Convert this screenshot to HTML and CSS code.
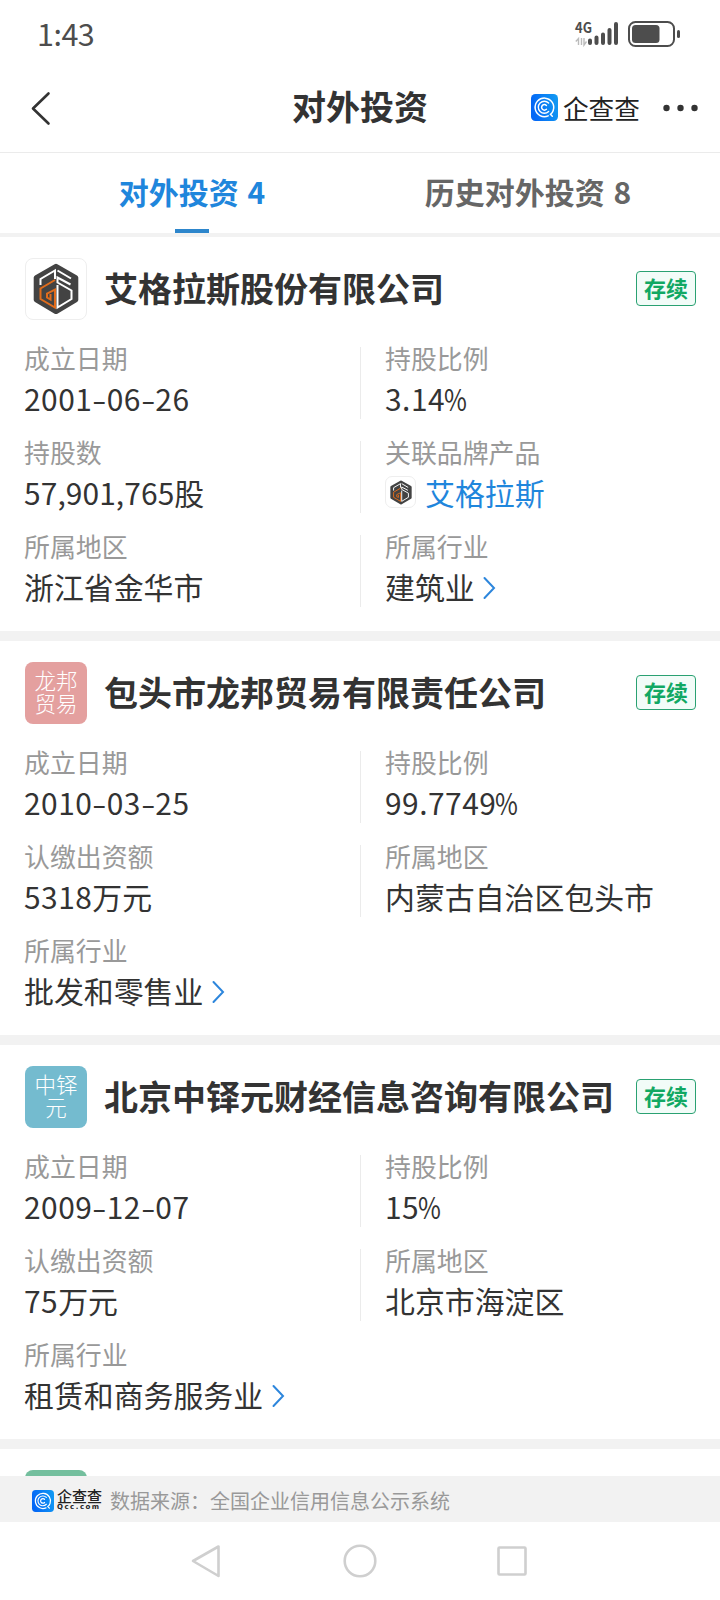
FILE: index.html
```
<!DOCTYPE html>
<html lang="zh-CN">
<head>
<meta charset="utf-8">
<title>对外投资</title>
<link rel="stylesheet" href="styles.css">
</head>
<body>
<svg class="defs" aria-hidden="true">
  <defs>
    <linearGradient id="blue" x1="0" x2="1" y1="0.2" y2="0"><stop offset="0" stop-color="#0468f6"/><stop offset="1" stop-color="#129cf2"/></linearGradient>
    <symbol id="qcc" viewBox="0 0 27 27">
      <rect width="27" height="27" rx="4.5" fill="url(#blue)"/>
      <g fill="none" stroke="#fff" stroke-linecap="round">
        <path d="M17.200 21.900A9.300 9.300 0 1 1 22.200 16.500Q21.500 18.800 19.500 20.300L21.300 22.200" stroke-width="1.500"/>
        <path d="M17.600 9.100A6 6 0 1 0 17.600 17.500" stroke-width="1.400"/>
        <path d="M15.400 11.400A2.800 2.800 0 1 0 15.400 15.300" stroke-width="1.500"/>
      </g>
    </symbol>
    <symbol id="gs" viewBox="0 0 46 52">
      <path d="M21.600 1.300Q23 .4 24.400 1.300L44 12.600Q45.300 13.400 45.300 14.600V37Q45.300 38.200 44 39L24.400 50.700Q23 51.500 21.600 50.700L2 39Q.7 38.200 .7 37V14.600Q.7 13.400 2 12.600Z" fill="#434343"/>
      <g fill="none" stroke-width="2">
        <path d="M7.500 22V16L22 7.500V16" stroke="#fff"/>
        <path d="M24.500 7.500L38 15.500M37.500 21.500L24.500 14.500V19.500L38.500 27.500V36L24.500 44.500V22" stroke="#fff"/>
        <path d="M22 17L7.500 25.500V36L22 44.500V26.500L14 30.500V34.500L17.500 36.500V31" stroke="#e06c1c"/>
      </g>
    </symbol>
  </defs>
</svg>
<div class="screen">
  <div class="status">
    <span class="time">1:43</span>
    <svg class="signal" width="108" height="32" viewBox="0 0 108 32">
      <text x="0" y="14" class="net" textLength="17" lengthAdjust="spacingAndGlyphs">4G</text>
      <path d="M3.500 26V19.500L.800 22.500M6.500 19V26M9 19V26L11.500 22.500" fill="none" stroke="#bbb" stroke-width="1.400"/>
      <g stroke="#4d4d4d" stroke-width="4" stroke-linecap="round"><path d="M15 21.500V24M21.500 18.500V24M28 15.500V24M34.500 11V24M41 5V24"/></g>
      <rect x="54" y="3" width="45" height="24" rx="6.500" fill="none" stroke="#4d4d4d" stroke-width="2"/>
      <rect x="57" y="6" width="27.500" height="18" rx="3.500" fill="#4d4d4d"/>
      <path d="M103.500 12.500V17.500" stroke="#4d4d4d" stroke-width="3" stroke-linecap="round"/>
    </svg>
  </div>
  <header class="nav">
    <svg class="back" width="20" height="36" viewBox="0 0 20 36"><path d="M17.500 3.500L2 18.500L17.500 33.500" fill="none" stroke="#333" stroke-width="2.600" stroke-linecap="round" stroke-linejoin="round"/></svg>
    <h1 class="heading">对外投资</h1>
    <div class="brand"><svg width="27" height="27"><use href="#qcc"/></svg><span class="brand-name">企查查</span>
      <svg class="more" width="36" height="8" viewBox="0 0 36 8" fill="#333"><circle cx="3.500" cy="4" r="3.200"/><circle cx="17.500" cy="4" r="3.200"/><circle cx="31.500" cy="4" r="3.200"/></svg>
    </div>
  </header>
  <nav class="tabs">
    <span class="tab active">对外投资 4</span>
    <span class="tab">历史对外投资 8</span>
  </nav>
  <main class="list">
    <article class="card">
      <div class="card-head"><span class="avatar image"><svg width="46" height="52"><use href="#gs"/></svg></span><h2 class="name">艾格拉斯股份有限公司</h2><span class="badge">存续</span></div>
      <div class="facts">
        <div class="fact"><span class="label">成立日期</span><span class="value">2001<i>-</i>06<i>-</i>26</span></div>
        <div class="fact"><span class="label">持股比例</span><span class="value">3.14<em>%</em></span></div>
        <div class="fact"><span class="label">持股数</span><span class="value grouped">57,901,765<b>股</b></span></div>
        <div class="fact"><span class="label">关联品牌产品</span><span class="value zh link"><span class="mini"><svg width="22" height="25"><use href="#gs"/></svg></span>艾格拉斯</span></div>
        <div class="fact"><span class="label">所属地区</span><span class="value zh">浙江省金华市</span></div>
        <div class="fact"><span class="label">所属行业</span><span class="value zh">建筑业<svg class="chevron" width="13" height="24" viewBox="0 0 13 24"><path d="M1.500 2L11 12L1.500 22"/></svg></span></div>
      </div>
    </article>
    <article class="card">
      <div class="card-head"><span class="avatar pink"><span>龙邦</span><span>贸易</span></span><h2 class="name">包头市龙邦贸易有限责任公司</h2><span class="badge">存续</span></div>
      <div class="facts">
        <div class="fact"><span class="label">成立日期</span><span class="value">2010<i>-</i>03<i>-</i>25</span></div>
        <div class="fact"><span class="label">持股比例</span><span class="value">99.7749<em>%</em></span></div>
        <div class="fact"><span class="label">认缴出资额</span><span class="value">5318<b>万元</b></span></div>
        <div class="fact"><span class="label">所属地区</span><span class="value zh">内蒙古自治区包头市</span></div>
        <div class="fact"><span class="label">所属行业</span><span class="value zh">批发和零售业<svg class="chevron" width="13" height="24" viewBox="0 0 13 24"><path d="M1.500 2L11 12L1.500 22"/></svg></span></div>
      </div>
    </article>
    <article class="card">
      <div class="card-head"><span class="avatar teal"><span>中铎</span><span>元</span></span><h2 class="name">北京中铎元财经信息咨询有限公司</h2><span class="badge">存续</span></div>
      <div class="facts">
        <div class="fact"><span class="label">成立日期</span><span class="value">2009<i>-</i>12<i>-</i>07</span></div>
        <div class="fact"><span class="label">持股比例</span><span class="value">15<em>%</em></span></div>
        <div class="fact"><span class="label">认缴出资额</span><span class="value">75<b>万元</b></span></div>
        <div class="fact"><span class="label">所属地区</span><span class="value zh">北京市海淀区</span></div>
        <div class="fact"><span class="label">所属行业</span><span class="value zh">租赁和商务服务业<svg class="chevron" width="13" height="24" viewBox="0 0 13 24"><path d="M1.500 2L11 12L1.500 22"/></svg></span></div>
      </div>
    </article>
    <article class="card"><div class="card-head"><span class="avatar green"></span></div></article>
  </main>
  <footer class="source">
    <svg width="22" height="22"><use href="#qcc"/></svg>
    <span class="source-brand"><span class="source-zh">企查查</span><span class="source-en">Qcc.com</span></span>
    <span class="source-text">数据来源：全国企业信用信息公示系统</span>
  </footer>
  <div class="system">
    <svg width="340" height="40" viewBox="0 0 340 40" fill="none" stroke="#cfcfcf" stroke-width="2.600" stroke-linejoin="round"><path d="M3 20L28.500 5.500V35Z"/><circle cx="170" cy="20" r="15.300"/><rect x="308.500" y="6.500" width="27" height="27" rx="1"/></svg>
  </div>
</div>
</body>
</html>
```
FILE: styles.css
```
* { box-sizing: border-box; }
body { margin: 0; background: #fff; }
.defs { position: absolute; width: 0; height: 0; }
.screen { width: 720px; height: 1600px; display: flex; flex-direction: column; overflow: hidden; font-family: "Noto Sans CJK SC", sans-serif; color: #333; background: #fff; }
.screen svg { display: block; flex: none; }
.status { height: 64px; flex: none; display: flex; justify-content: space-between; padding: 19px 37px 0 37px; }
.signal { overflow: visible; }
.time { font-size: 30.500px; line-height: 28px; color: #4d4d4d; letter-spacing: -.5px; }
.net { font: 700 14px "Noto Sans CJK SC", sans-serif; fill: #4d4d4d; }
.nav { height: 89px; flex: none; display: grid; grid-template-columns: 261px 138px 1fr; align-items: center; padding: 0 21px 1px 31px; border-bottom: 1px solid #ebebeb; }
.heading { margin: 0; font-size: 34px; line-height: 40px; font-weight: 700; padding-bottom: 3px; white-space: nowrap; }
.brand { display: flex; align-items: center; justify-content: flex-end; }
.brand-name { font-size: 25.700px; line-height: 28px; margin: 0 23px 0 5px; color: #222; }
.tabs { height: 84px; flex: none; display: grid; grid-template-columns: 384px 288px; justify-content: start; border-bottom: 4px solid #f2f2f2; }
.tab { position: relative; height: 80px; text-align: center; font-size: 30px; font-weight: 700; line-height: 77px; color: #666; word-spacing: 2px; }
.active { color: #1f86dc; }
.active::after { content: ""; position: absolute; left: 175px; bottom: 0; width: 34px; height: 4px; background: #2d86cc; }
.list { height: 1239px; flex: none; overflow: hidden; }
.card { height: 404px; border-bottom: 10px solid #f2f2f2; padding: 21px 24px 0 24px; }
.card-head { display: flex; align-items: center; height: 62px; }
.avatar { width: 62px; height: 62px; margin-left: 1px; flex: none; border-radius: 8px; display: flex; flex-direction: column; align-items: center; justify-content: center; padding-bottom: 4px; color: #fff; font-size: 21.500px; line-height: 23px; font-weight: 300; }
.image { border: 1px solid #eee; padding-bottom: 0; }
.pink { background: #e4a09f; }
.teal { background: #74bbcf; }
.green { background: #74bf9e; }
.name { flex: 1; margin: 0 0 0 17px; padding-bottom: 3px; font-size: 34px; line-height: 40px; font-weight: 700; white-space: nowrap; }
.badge { width: 60px; height: 35px; flex: none; margin-bottom: 1px; border: 1px solid #2aa172; border-radius: 4px; background: #f2fcf8; color: #11a863; font-size: 22px; line-height: 31px; font-weight: 700; text-align: center; }
.facts { margin-top: 27px; display: grid; grid-template-columns: 336px 336px; row-gap: 22px; }
.fact { height: 72px; display: flex; flex-direction: column; gap: 8px; }
.fact:nth-child(even) { border-left: 1px solid #ebebeb; padding-left: 24px; }
.label { height: 25px; font-size: 25.900px; line-height: 21px; color: #999; }
.value { display: flex; align-items: center; height: 36px; font-size: 29.900px; line-height: 36px; letter-spacing: .5px; white-space: nowrap; }
.value b { font-weight: 400; letter-spacing: 0; }
.value i { font-style: normal; width: 14.400px; text-align: center; letter-spacing: 0; transform: scaleX(1.400); }
.value em { font-style: normal; width: 24px; margin-left: -1px; letter-spacing: 0; transform: scaleX(.83); transform-origin: left; }
.grouped { letter-spacing: .100px; }
.value.zh { letter-spacing: 0; }
.link { color: #1f86dc; }
.mini { width: 31px; height: 32px; border: 1px solid #eee; border-radius: 7px; margin-right: 9px; display: flex; align-items: center; justify-content: center; }
.chevron { margin: 4px 0 0 8.500px; fill: none; stroke: #2d86dc; stroke-width: 2; stroke-linecap: round; }
.source { height: 46px; flex: none; background: #f2f2f2; display: flex; align-items: center; padding: 3px 0 0 32px; }
.source-brand { display: flex; flex-direction: column; width: 46px; margin: 0 0 2px 3px; color: #222; }
.source-zh { font-size: 15px; line-height: 15px; font-weight: 500; }
.source-en { margin-top: 1px; font: 700 7px/7px "DejaVu Sans", sans-serif; letter-spacing: 1.500px; }
.source-text { margin-left: 7px; font-size: 20px; line-height: 30px; color: #999; }
.system { flex: 1; display: flex; justify-content: center; align-items: center; }
```
